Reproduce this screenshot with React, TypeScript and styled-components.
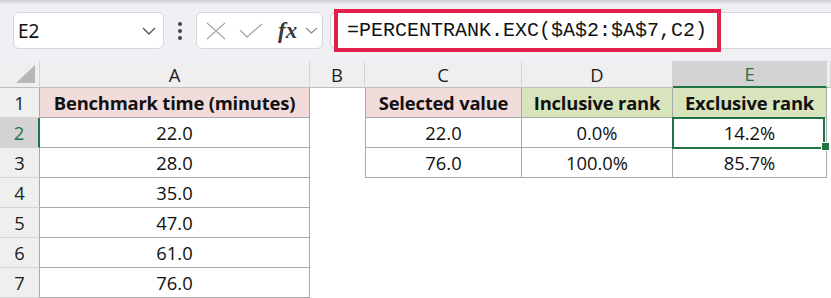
import React from "react";
import styled, { createGlobalStyle } from "styled-components";

const colors = {
  toolbar: "#eef0f3",
  header: "#efefef",
  headerSel: "#d3d3d3",
  headerLine: "#d5d5d5",
  tableLine: "#a9a9a9",
  green: "#217346",
  pink: "#f2dcdb",
  lime: "#d8e4bc",
  red: "#e3204b",
  text: "#111",
};

const GlobalStyle = createGlobalStyle`
  body {
    margin: 0;
    background: #fff;
    font-family: "Open Sans", "Noto Sans", sans-serif;
  }
`;

type Fill = "pink" | "lime" | "white";

interface RowData {
  a: string;
  c?: string;
  d?: string;
  e?: string;
}

const rows: RowData[] = [
  { a: "Benchmark time (minutes)", c: "Selected value", d: "Inclusive rank", e: "Exclusive rank" },
  { a: "22.0", c: "22.0", d: "0.0%", e: "14.2%" },
  { a: "28.0", c: "76.0", d: "100.0%", e: "85.7%" },
  { a: "35.0" },
  { a: "47.0" },
  { a: "61.0" },
  { a: "76.0" },
];

const Chevron = () => (
  <svg width="14" height="8" viewBox="0 0 14 8">
    <polyline points="1,1 7,7 13,1" fill="none" stroke="#555" strokeWidth="1.4" />
  </svg>
);

export default function App() {
  return (
    <Page>
      <GlobalStyle />
      <Toolbar>
        <NameBox>
          <span>E2</span>
          <Chevron />
        </NameBox>
        <Dots>
          <i />
          <i />
          <i />
        </Dots>
        <FnBox>
          <svg width="20" height="18" viewBox="0 0 20 18">
            <path d="M1 1 L19 17 M19 1 L1 17" stroke="#a9a9a9" strokeWidth="1.3" fill="none" />
          </svg>
          <svg width="24" height="15" viewBox="0 0 24 15">
            <polyline points="1,7 8,14 23,1" stroke="#a9a9a9" strokeWidth="1.3" fill="none" />
          </svg>
          <Fx>fx</Fx>
          <SmallChevron>
            <svg width="13" height="7" viewBox="0 0 13 7">
              <polyline points="1,1 6.5,6 12,1" fill="none" stroke="#8a8a8a" strokeWidth="1.2" />
            </svg>
          </SmallChevron>
        </FnBox>
        <FormulaBar>
          <Highlight>=PERCENTRANK.EXC($A$2:$A$7,C2)</Highlight>
        </FormulaBar>
      </Toolbar>

      <Sheet>
        <Corner />
        <ColHeader>A</ColHeader>
        <ColHeader>B</ColHeader>
        <ColHeader>C</ColHeader>
        <ColHeader>D</ColHeader>
        <ColHeader $selected>E</ColHeader>
        <ColHeader />

        {rows.map((r, i) => {
          const first = i === 0;
          const inTable = i < 3;
          const fillC: Fill = first ? "pink" : "white";
          const fillDE: Fill = first ? "lime" : "white";
          return (
            <React.Fragment key={i}>
              <RowHeader $selected={i === 1}>{i + 1}</RowHeader>
              <Cell $box $fill={first ? "pink" : "white"} $bold={first}>
                {r.a}
              </Cell>
              <Cell $fill="white" />
              <Cell $box={inTable} $left={inTable} $fill={fillC} $bold={first}>
                {r.c}
              </Cell>
              <Cell $box={inTable} $fill={fillDE} $bold={first}>
                {r.d}
              </Cell>
              <Cell $box={inTable} $fill={fillDE} $bold={first} $active={i === 1}>
                {r.e}
                {i === 1 && (
                  <>
                    <Selection />
                    <FillHandle />
                  </>
                )}
              </Cell>
              <Cell $fill="white" />
            </React.Fragment>
          );
        })}
      </Sheet>
    </Page>
  );
}

const Page = styled.div`
  width: 831px;
  height: 298px;
  overflow: hidden;
  background: #fff;
`;

const Toolbar = styled.div`
  height: 61px;
  box-sizing: border-box;
  display: flex;
  align-items: center;
  padding-left: 13px;
  background: linear-gradient(#c9ccd0 0, #e2e4e7 3px, ${colors.toolbar} 5px);
`;

const NameBox = styled.div`
  width: 151px;
  height: 37px;
  box-sizing: border-box;
  display: flex;
  align-items: center;
  justify-content: space-between;
  padding: 0 7px 0 4px;
  background: #fff;
  border: 1px solid #d4d6d9;
  border-radius: 6px;
  font-family: "Noto Sans", sans-serif;
  font-size: 19px;
  color: ${colors.text};
`;

const Dots = styled.div`
  width: 32px;
  display: flex;
  flex-direction: column;
  align-items: center;
  gap: 3px;

  i {
    width: 4px;
    height: 4px;
    border-radius: 50%;
    background: #444;
  }
`;

const FnBox = styled.div`
  width: 127px;
  height: 37px;
  box-sizing: border-box;
  display: flex;
  align-items: center;
  gap: 13px;
  padding-left: 9px;
  background: #fff;
  border: 1px solid #d4d6d9;
  border-radius: 6px;
`;

const Fx = styled.span`
  font-family: "Liberation Serif", serif;
  font-style: italic;
  font-weight: bold;
  font-size: 23px;
  color: #3a3a3a;
  margin-left: 2px;
  line-height: 1;
`;

const SmallChevron = styled.span`
  display: flex;
  margin-left: -5px;
`;

const FormulaBar = styled.div`
  flex: 1;
  height: 37px;
  margin-left: 7px;
  box-sizing: border-box;
  display: flex;
  align-items: center;
  background: #fff;
  border: 1px solid #d4d6d9;
  border-right: none;
  border-radius: 6px 0 0 6px;
`;

const Highlight = styled.div`
  width: 387px;
  height: 43px;
  margin-left: 3px;
  box-sizing: border-box;
  display: flex;
  align-items: center;
  padding-left: 9px;
  border: 4px solid ${colors.red};
  font-family: "Liberation Mono", monospace;
  font-size: 20px;
  color: ${colors.text};
`;

const Sheet = styled.div`
  display: grid;
  grid-template-columns: 40px 270px 55px 157px 151px 154px 4px;
  grid-template-rows: 27px;
  grid-auto-rows: 30px;
  font-family: "Open Sans", "Noto Sans", sans-serif;
  font-size: 18.4px;
  color: ${colors.text};
`;

const Corner = styled.div`
  position: relative;
  background: ${colors.header};
  border-right: 1px solid ${colors.headerLine};
  border-bottom: 1px solid #bdbdbd;

  &::after {
    content: "";
    position: absolute;
    right: 4px;
    bottom: 4px;
    width: 19px;
    height: 18px;
    background: #b7b7b7;
    clip-path: polygon(100% 0, 100% 100%, 0 100%);
  }
`;

const ColHeader = styled.div<{ $selected?: boolean }>`
  display: flex;
  align-items: center;
  justify-content: center;
  background: ${(p) => (p.$selected ? colors.headerSel : colors.header)};
  color: ${(p) => (p.$selected ? colors.green : "#1e1e1e")};
  border-right: 1px solid ${colors.headerLine};
  border-bottom: ${(p) => (p.$selected ? `2px solid ${colors.green}` : "1px solid #bdbdbd")};
`;

const RowHeader = styled.div<{ $selected?: boolean }>`
  display: flex;
  align-items: center;
  justify-content: center;
  background: ${(p) => (p.$selected ? colors.headerSel : colors.header)};
  color: ${(p) => (p.$selected ? colors.green : "#1e1e1e")};
  border-bottom: 1px solid ${colors.headerLine};
  border-right: ${(p) => (p.$selected ? `2px solid ${colors.green}` : `1px solid ${colors.tableLine}`)};
`;

const fills: Record<Fill, string> = {
  pink: colors.pink,
  lime: colors.lime,
  white: "#fff",
};

const Cell = styled.div<{
  $fill: Fill;
  $box?: boolean;
  $left?: boolean;
  $bold?: boolean;
  $active?: boolean;
}>`
  position: ${(p) => (p.$active ? "relative" : "static")};
  display: flex;
  align-items: center;
  justify-content: center;
  white-space: nowrap;
  background: ${(p) => fills[p.$fill]};
  font-weight: ${(p) => (p.$bold ? 700 : 400)};
  letter-spacing: ${(p) => (p.$bold ? "-0.2px" : "0")};
  border-right: ${(p) => (p.$box ? `1px solid ${colors.tableLine}` : "none")};
  border-bottom: ${(p) => (p.$box ? `1px solid ${colors.tableLine}` : "none")};
  border-left: ${(p) => (p.$left ? `1px solid ${colors.tableLine}` : "none")};
`;

const Selection = styled.div`
  position: absolute;
  top: -1px;
  left: -1px;
  right: 1px;
  bottom: -2px;
  border: 2px solid ${colors.green};
  pointer-events: none;
`;

const FillHandle = styled.div`
  position: absolute;
  right: -4px;
  bottom: -4px;
  width: 7px;
  height: 7px;
  background: ${colors.green};
  border: 1px solid #fff;
`;
